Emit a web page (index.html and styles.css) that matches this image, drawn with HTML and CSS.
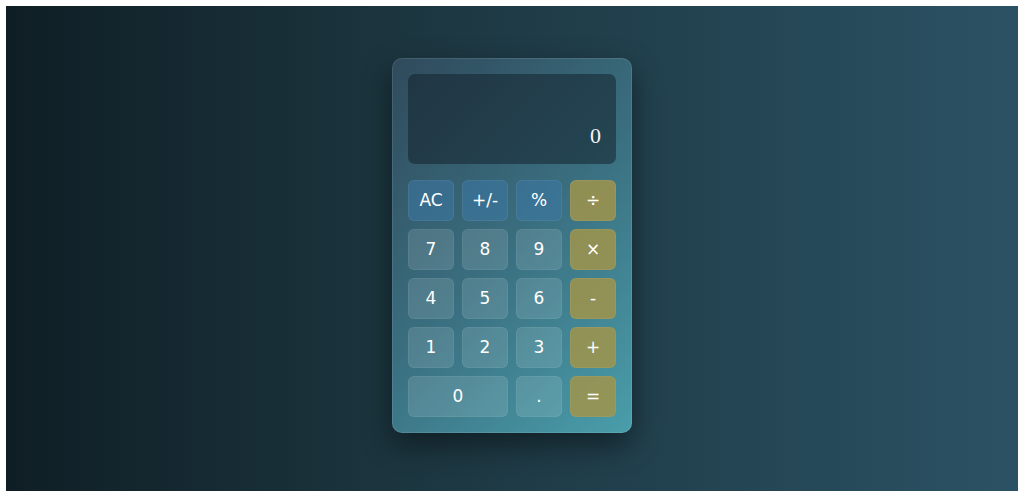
FILE: index.html
```
<!DOCTYPE html>
<html>
<head>
<meta charset="utf-8">
<link rel="stylesheet" href="styles.css">
</head>
<body>
<div class="page">
  <div class="calc">
    <div class="display"><span class="value">0</span></div>
    <div class="keys">
      <button class="key fn">AC</button>
      <button class="key fn">+/-</button>
      <button class="key fn">%</button>
      <button class="key op">÷</button>
      <button class="key">7</button>
      <button class="key">8</button>
      <button class="key">9</button>
      <button class="key op">×</button>
      <button class="key">4</button>
      <button class="key">5</button>
      <button class="key">6</button>
      <button class="key op">-</button>
      <button class="key">1</button>
      <button class="key">2</button>
      <button class="key">3</button>
      <button class="key op">+</button>
      <button class="key wide">0</button>
      <button class="key">.</button>
      <button class="key op">=</button>
    </div>
  </div>
</div>
</body>
</html>
```
FILE: styles.css
```
html, body { margin: 0; padding: 0; background: #fff; }
body { padding: 6px; }
.page {
  height: 485px;
  background: linear-gradient(90deg, #0f1e25 0%, #1c3640 40%, #2b5264 100%);
  display: flex;
  align-items: center;
  justify-content: center;
}
.calc {
  width: 208px;
  padding: 16px;
  border-radius: 10px;
  background: linear-gradient(135deg, #2f4a5b 0%, #3a6f80 50%, #4a9eab 100%);
  box-shadow: inset 0 0 0 1px rgba(255,255,255,0.1), 0 12px 30px rgba(0,0,0,0.45);
  margin-top: -7px;
}
.display {
  height: 90px;
  border-radius: 7px;
  background: rgba(20, 35, 45, 0.55);
  display: flex;
  align-items: flex-end;
  justify-content: flex-end;
  padding: 0 15px 17px 0;
  box-sizing: border-box;
  margin-bottom: 16px;
}
.value {
  font-family: "Liberation Serif", "Times New Roman", serif;
  font-size: 22px;
  color: #f2f5f5;
  line-height: 1;
}
.keys {
  display: grid;
  grid-template-columns: repeat(4, 46px);
  grid-auto-rows: 41px;
  column-gap: 8px;
  row-gap: 8px;
}
.key {
  border: 1px solid rgba(255,255,255,0.06);
  border-radius: 6px;
  background: rgba(255,255,255,0.12);
  color: #ffffff;
  font-family: "DejaVu Sans", Verdana, sans-serif;
  font-size: 17px;
  padding: 0;
  margin: 0;
}
.key.fn { background: rgba(60, 120, 165, 0.55); }
.key.op { background: rgba(160, 148, 75, 0.85); }
.key.wide { grid-column: span 2; }
```
